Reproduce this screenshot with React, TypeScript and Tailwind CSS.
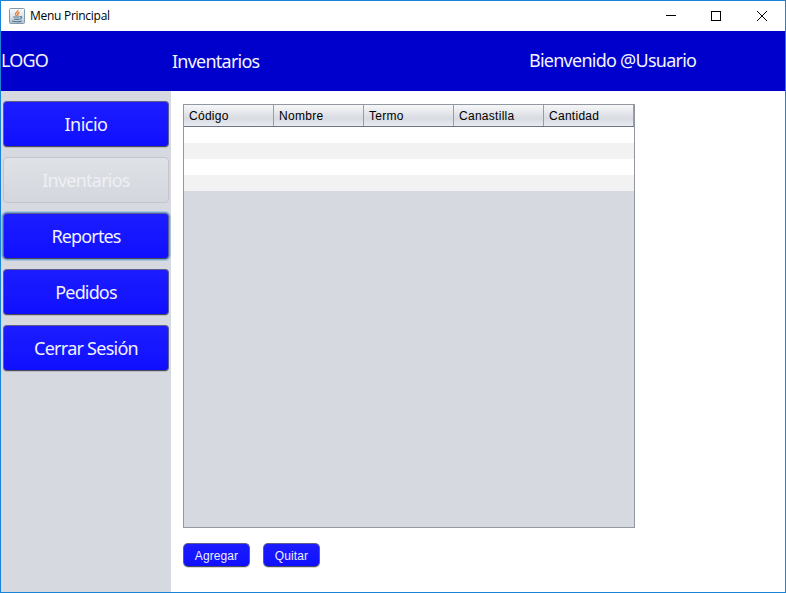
import React from 'react';

const columns = ['Código', 'Nombre', 'Termo', 'Canastilla', 'Cantidad'];

const tahoma = "font-['Noto_Sans',sans-serif] text-[18px] leading-6 whitespace-nowrap";
const arial = "font-['Liberation_Sans',sans-serif] text-[12px] leading-4 whitespace-nowrap";

function JavaIcon() {
  return (
    <svg width="16" height="16" viewBox="0 0 16 16" className="shrink-0">
      <defs>
        <linearGradient id="tile" x1="0" y1="0" x2="0" y2="1">
          <stop offset="0" stopColor="#fafbfc" />
          <stop offset="0.5" stopColor="#dfe5ea" />
          <stop offset="1" stopColor="#b4c2cd" />
        </linearGradient>
      </defs>
      <rect x="0.5" y="0.5" width="15" height="15" rx="1" fill="url(#tile)" stroke="#8499aa" />
      <path d="M9 2C9.4 3.6 6.2 4.4 6.5 6c.1.9.8 1.3.9 2.1M10.6 4.5C9 5 8.4 5.6 8.7 6.4c.3.6.4.9 0 1.6" fill="none" stroke="#e87f34" strokeWidth="1.4" />
      <path d="M4.3 9h6.2M4.8 10.9c1.5.5 4 .5 5.4 0M3 13c2.4 1 7.4 1 9.6-.1M10.8 8.7c2.6-.5 2.4 2-.2 2.4" fill="none" stroke="#4a7596" strokeWidth="1.1" />
    </svg>
  );
}

function MenuButton({ label, spacing, disabled, focused }: { label: string; spacing: string; disabled?: boolean; focused?: boolean }) {
  const face = disabled
    ? 'border-[#c3c5ca] bg-linear-to-b from-[#dfe2e6] to-[#d3d6dd] text-[#eef0f4]'
    : 'border-[#5c5c90] border-b-[#4c4c58] bg-linear-to-b from-[#1c1cff] to-[#0f0fff] text-[#f2f2ff]';
  const ring = focused ? 'shadow-[0_0_0_1px_#73a4d1,0_0_0_2px_#a9c5dd]' : disabled ? '' : 'shadow-[0_1px_0_#b9bcc6]';
  return (
    <button className={`flex h-[46px] w-[166px] items-center justify-center rounded-[4px] border ${face} ${ring}`}>
      <span className={`${tahoma} ${spacing}`}>{label}</span>
    </button>
  );
}

function SmallButton({ label, width }: { label: string; width: string }) {
  return (
    <button className={`flex h-6 items-center justify-center rounded-[5px] border border-[#5c5c90] border-b-[#4c4c58] bg-linear-to-b from-[#1c1cff] to-[#0f0fff] pt-px text-[#eeeeff] shadow-[0_1px_0_#d5d5dd] ${width}`}>
      <span className={`${arial} tracking-[0.1px]`}>{label}</span>
    </button>
  );
}

export default function App() {
  return (
    <div className="flex h-[593px] w-[786px] flex-col overflow-hidden border border-[#1883d7] bg-white">
      <div className="flex h-[30px] shrink-0 items-center pl-2">
        <JavaIcon />
        <span className="ml-[5px] font-['Open_Sans',sans-serif] text-[12px] leading-4 tracking-[-0.28px] whitespace-nowrap text-black">Menu Principal</span>
        <svg width="110" height="16" viewBox="0 0 110 16" className="mr-[10px] ml-auto" fill="none" stroke="#000">
          <path d="M0 7.5h10" shapeRendering="crispEdges" transform="translate(1 0)" />
          <rect x="46.5" y="3.5" width="9" height="9" />
          <path d="M92 3l10 10M102 3L92 13" />
        </svg>
      </div>
      <header className={`flex h-[60px] shrink-0 items-center bg-[#0000cd] text-[#f4f4ff] ${tahoma}`}>
        <span className="w-[171px] pb-0.5 tracking-[-0.8px]">LOGO</span>
        <span className="w-[357px] tracking-[-0.76px]">Inventarios</span>
        <span className="pb-0.5 tracking-[-0.75px]">Bienvenido @Usuario</span>
      </header>
      <div className="flex min-h-0 flex-1">
        <nav className="flex w-[170px] shrink-0 flex-col gap-[10px] bg-[#d6d9df] pt-[10px] pl-[2px]">
          <MenuButton label="Inicio" spacing="tracking-[-0.5px]" />
          <MenuButton label="Inventarios" spacing="tracking-[-0.76px]" disabled />
          <MenuButton label="Reportes" spacing="tracking-[-0.85px]" focused />
          <MenuButton label="Pedidos" spacing="tracking-[-0.85px]" />
          <MenuButton label="Cerrar Sesión" spacing="tracking-[-0.75px]" />
        </nav>
        <main className="pt-[13px] pl-3">
          <div className="flex h-[424px] w-[452px] flex-col border border-[#9297a1] bg-[#d6d9df]">
            <div className="flex h-[22px] shrink-0 border-b border-[#6f7380]">
              {columns.map((name) => (
                <div key={name} className="flex w-[90px] items-center border-r border-[#9a9da6] bg-linear-to-b from-[#f6f7f8] via-[#d8dbe1] via-65% to-[#e9edf3] pl-[5px]">
                  <span className={`${arial} tracking-[0.28px] text-black`}>{name}</span>
                </div>
              ))}
            </div>
            <div className="h-4 bg-white" />
            <div className="h-4 bg-[#f2f2f2]" />
            <div className="h-4 bg-white" />
            <div className="h-4 bg-[#f2f2f2]" />
          </div>
          <div className="mt-[15px] flex gap-[13px]">
            <SmallButton label="Agregar" width="w-[67px]" />
            <SmallButton label="Quitar" width="w-[57px]" />
          </div>
        </main>
      </div>
    </div>
  );
}
